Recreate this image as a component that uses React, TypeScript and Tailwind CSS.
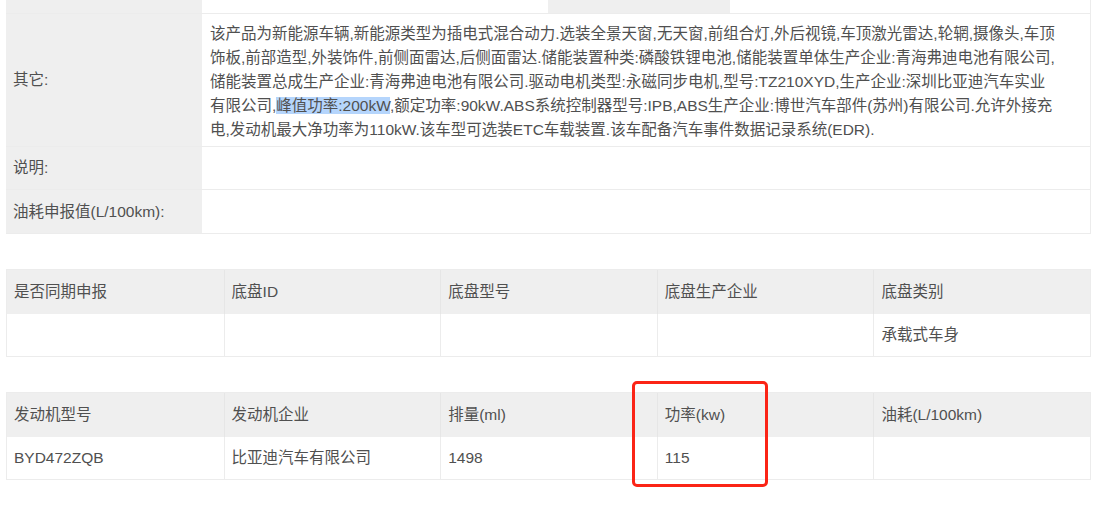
const font = { fontFamily: '"Liberation Sans", "Noto Sans CJK SC", sans-serif' };

const otherLines: React.ReactNode[] = [
  "该产品为新能源车辆,新能源类型为插电式混合动力.选装全景天窗,无天窗,前组合灯,外后视镜,车顶激光雷达,轮辋,摄像头,车顶",
  "饰板,前部造型,外装饰件,前侧面雷达,后侧面雷达.储能装置种类:磷酸铁锂电池,储能装置单体生产企业:青海弗迪电池有限公司,",
  "储能装置总成生产企业:青海弗迪电池有限公司.驱动电机类型:永磁同步电机,型号:TZ210XYD,生产企业:深圳比亚迪汽车实业",
  <>
    有限公司,<span className="bg-[#b5d5fc]">峰值功率:200kW</span>,额定功率:90kW.ABS系统控制器型号:IPB,ABS生产企业:博世汽车部件(苏州)有限公司.允许外接充
  </>,
  "电,发动机最大净功率为110kW.该车型可选装ETC车载装置.该车配备汽车事件数据记录系统(EDR).",
];

const chassisHead = ["是否同期申报", "底盘ID", "底盘型号", "底盘生产企业", "底盘类别"];
const chassisBody = ["", "", "", "", "承载式车身"];
const engineHead = ["发动机型号", "发动机企业", "排量(ml)", "功率(kw)", "油耗(L/100km)"];
const engineBody = ["BYD472ZQB", "比亚迪汽车有限公司", "1498", "115", ""];

function GridTable({ head, body }: { head: string[]; body: string[] }) {
  return (
    <div className="w-[1085px] border border-[#ececec]">
      <div className="grid h-[44px] grid-cols-5 bg-[#efefef]">
        {head.map((h, i) => (
          <div key={i} className="flex items-center border-l border-[#e6e6e6] px-[7px] first:border-l-0">
            {h}
          </div>
        ))}
      </div>
      <div className="grid h-[42px] grid-cols-5 bg-white">
        {body.map((b, i) => (
          <div key={i} className="flex items-center border-l border-[#ececec] px-[7px] first:border-l-0">
            {b}
          </div>
        ))}
      </div>
    </div>
  );
}

export default function App() {
  return (
    <div className="h-[505px] w-[1102px] overflow-hidden bg-white pl-[6px] text-[15.5px] text-[#505050]" style={font}>
      <div className="w-[1085px] border-r border-b border-[#ececec]">
        <div className="flex h-[14px] border-b border-[#ececec]">
          <div className="w-[196px] bg-[#efefef]" />
          <div className="w-[346px] bg-white" />
          <div className="w-[182px] bg-[#efefef]" />
          <div className="flex-1 bg-white" />
        </div>
        <div className="flex border-b border-[#ececec]">
          <div className="flex w-[196px] items-center bg-[#efefef] px-[7px]">其它:</div>
          <div className="flex-1 bg-white px-[8px] pt-[8px] pb-[4px] leading-[24px]">
            {otherLines.map((l, i) => (
              <div key={i} className="whitespace-nowrap">
                {l}
              </div>
            ))}
          </div>
        </div>
        <div className="flex h-[43px] border-b border-[#ececec]">
          <div className="flex w-[196px] items-center bg-[#efefef] px-[7px]">说明:</div>
          <div className="flex-1 bg-white" />
        </div>
        <div className="flex h-[43px]">
          <div className="flex w-[196px] items-center bg-[#efefef] px-[7px]">油耗申报值(L/100km):</div>
          <div className="flex-1 bg-white" />
        </div>
      </div>

      <div className="mt-[35px]">
        <GridTable head={chassisHead} body={chassisBody} />
      </div>

      <div className="relative mt-[35px]">
        <GridTable head={engineHead} body={engineBody} />
        <div className="absolute left-[626px] top-[-11px] h-[106px] w-[136px] rounded-[5px] border-[3px] border-[#fb2416]" />
      </div>
    </div>
  );
}
